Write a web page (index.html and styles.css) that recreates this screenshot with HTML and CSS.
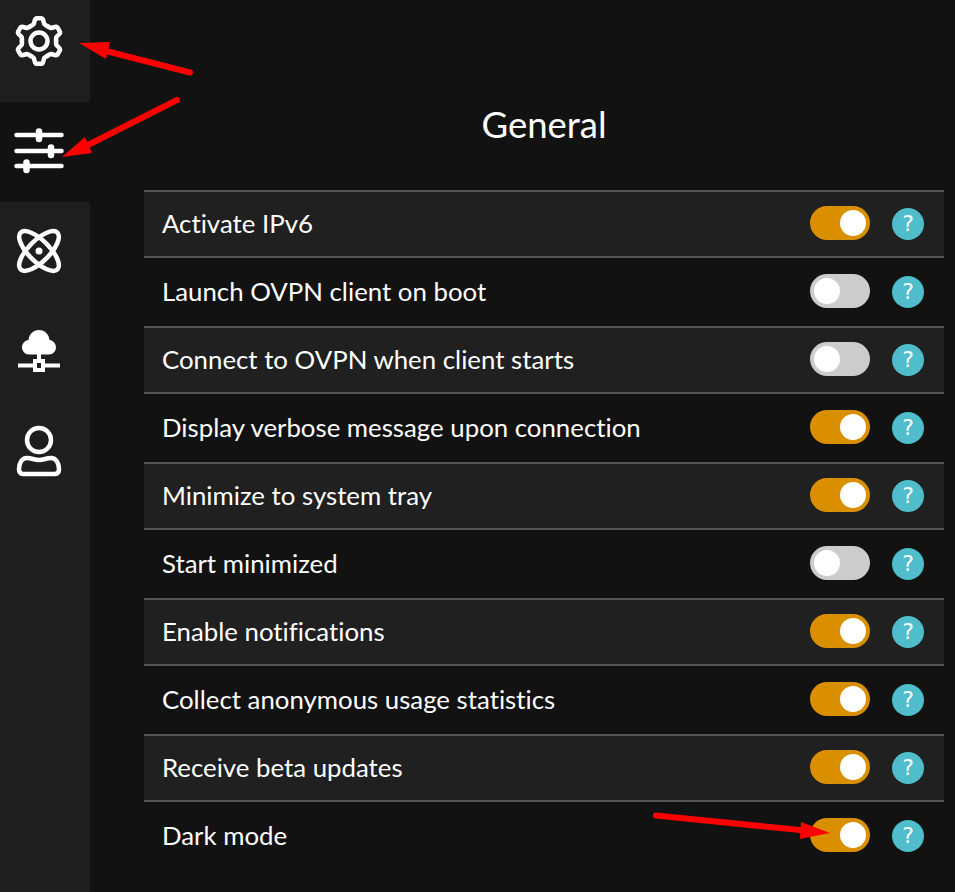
FILE: index.html
```html
<!DOCTYPE html>
<html lang="en">
<head>
<meta charset="utf-8">
<title>General settings</title>
<link rel="stylesheet" href="styles.css">
</head>
<body>
<div class="app">
  <nav class="sidebar">
    <div class="nav-item nav-first">
      <svg class="icon" viewBox="-30 -30 60 60">
        <defs><path id="tooth" d="M-8.800-14.700Q-6.800-15.400-5.200-17L-4.200-20.800Q-3.600-22.800-2-22.800H2Q3.600-22.800 4.200-20.800L5.200-17Q6.800-15.400 8.800-14.700"/></defs>
        <use href="#tooth"/>
        <use href="#tooth" transform="rotate(60)"/>
        <use href="#tooth" transform="rotate(120)"/>
        <use href="#tooth" transform="rotate(180)"/>
        <use href="#tooth" transform="rotate(240)"/>
        <use href="#tooth" transform="rotate(300)"/>
        <circle r="8.500"/>
      </svg>
    </div>
    <div class="nav-item nav-active">
      <svg class="icon" viewBox="9 121 60 60">
        <path d="M16.500 135H61.500M16.500 151H61.500M16.500 166H61.500"/>
        <path class="knob" d="M39 131.500V139M51 147.500V155M26.500 162.500V170"/>
      </svg>
    </div>
    <div class="nav-item">
      <svg class="icon" viewBox="9 221 60 60">
        <ellipse cx="39" cy="251" rx="26" ry="10.500" transform="rotate(45 39 251)"/>
        <ellipse cx="39" cy="251" rx="26" ry="10.500" transform="rotate(-45 39 251)"/>
        <circle class="fill" cx="39" cy="251" r="3.500"/>
      </svg>
    </div>
    <div class="nav-item">
      <svg class="icon" viewBox="9 321 60 60">
        <path class="fill" d="M29 354.500C25 354.500 22 351 22 347.500C22 343.500 25 340.500 28.500 340C29 334.500 33 330 39 330C45 330 49 334.500 49.500 340C53 340.500 56 343.500 56 347.500C56 351 53 354.500 49 354.500Z"/>
        <path class="thin" d="M39 354V360M18 365.500H33M45 365.500H60"/>
        <rect class="thin" x="35" y="361" width="8" height="9"/>
      </svg>
    </div>
    <div class="nav-item">
      <svg class="icon" viewBox="9 421 60 60">
        <circle cx="39" cy="440" r="12"/>
        <path d="M27 458C32 458 34 460 39 460C44 460 46 458 51 458C56 458 59 463 59 469C59 472 58 474 55 474H23C20 474 19 472 19 469C19 463 22 458 27 458Z"/>
      </svg>
    </div>
  </nav>
  <main class="content">
    <h1 class="title">General</h1>
    <ul class="settings">
      <li class="row"><span class="label">Activate IPv6</span><span class="toggle on"></span><span class="help">?</span></li>
      <li class="row"><span class="label">Launch OVPN client on boot</span><span class="toggle"></span><span class="help">?</span></li>
      <li class="row"><span class="label">Connect to OVPN when client starts</span><span class="toggle"></span><span class="help">?</span></li>
      <li class="row"><span class="label">Display verbose message upon connection</span><span class="toggle on"></span><span class="help">?</span></li>
      <li class="row"><span class="label">Minimize to system tray</span><span class="toggle on"></span><span class="help">?</span></li>
      <li class="row"><span class="label">Start minimized</span><span class="toggle"></span><span class="help">?</span></li>
      <li class="row"><span class="label">Enable notifications</span><span class="toggle on"></span><span class="help">?</span></li>
      <li class="row"><span class="label">Collect anonymous usage statistics</span><span class="toggle on"></span><span class="help">?</span></li>
      <li class="row"><span class="label">Receive beta updates</span><span class="toggle on"></span><span class="help">?</span></li>
      <li class="row"><span class="label">Dark mode</span><span class="toggle on"></span><span class="help">?</span></li>
    </ul>
  </main>
</div>
<svg class="arrows" viewBox="0 0 955 892">
  <path class="shaft" d="M190 72.500L106 51"/>
  <path class="head" d="M79 43L110 42L106 59Z"/>
  <path class="shaft" d="M177 100L88 145"/>
  <path class="head" d="M62 157L85 137L92 153Z"/>
  <path class="shaft" d="M656 815.500L805 830.500"/>
  <path class="head" d="M830 833L801 822L800 839Z"/>
</svg>
</body>
</html>
```
FILE: styles.css
```css
* { box-sizing: border-box; }
html, body { margin: 0; padding: 0; height: 892px; overflow: hidden; background: #121212; }
body { font-family: "Lato", sans-serif; color: #fff; position: relative; font-variant-ligatures: none; }
.app { display: flex; height: 892px; }
.sidebar { width: 90px; flex: none; background: #1e1e1e; display: flex; flex-direction: column; }
.nav-item { height: 100px; padding: 19px 0 0 9px; }
.nav-first { height: 102px; padding-top: 11px; }
.nav-active { background: #121212; }
.icon { display: block; width: 60px; height: 60px; fill: none; stroke: #fff; stroke-width: 4.500; stroke-linecap: round; stroke-linejoin: round; }
.icon .fill { fill: #fff; stroke: none; }
.icon .knob { stroke-width: 6.500; }
.icon .thin { stroke-width: 4; stroke-linecap: butt; stroke-linejoin: miter; }
.content { flex: 1; padding: 0 11px 0 54px; }
.title { margin: 0; height: 190px; padding-top: 102px; font-size: 36.500px; line-height: 44px; font-weight: 400; text-align: center; }
.settings { list-style: none; margin: 0; padding: 0; }
.row { height: 68px; display: flex; align-items: center; padding: 0 20px 0 18px; font-size: 25.800px; }
.row:nth-child(odd) { background: #202020; border-top: 2px solid #555; border-bottom: 2px solid #555; }
.label { flex: 1; margin-bottom: 2px; }
.toggle { width: 60px; height: 34px; margin-bottom: 2px; border-radius: 17px; background: #ccc; padding: 4px; display: flex; justify-content: flex-start; }
.toggle::after { content: ""; width: 26px; height: 26px; border-radius: 50%; background: #fff; }
.toggle.on { background: #d98f00; justify-content: flex-end; }
.help { width: 32px; height: 32px; margin-left: 22px; border-radius: 50%; background: #4fbdca; color: #fff; font-family: "DejaVu Sans", sans-serif; font-size: 22px; line-height: 32px; text-align: center; }
.arrows { position: absolute; left: 0; top: 0; width: 955px; height: 892px; pointer-events: none; }
.shaft { fill: none; stroke: #f00; stroke-width: 6; stroke-linecap: round; }
.head { fill: #f00; }
```
